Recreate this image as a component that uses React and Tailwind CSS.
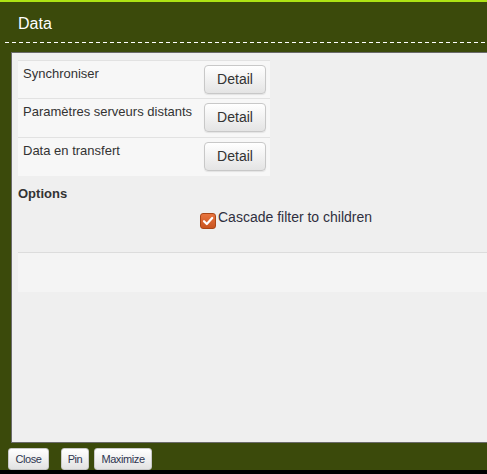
import React from 'react'

const font = { fontFamily: '"Liberation Sans", Arial, sans-serif' }

// Bouton "Detail" des lignes
function DetailButton() {
  return (
    <button className="w-[62px] h-[29px] mt-[4px] rounded-[4px] border border-[#c8c8c8] bg-gradient-to-b from-white to-[#e4e4e4] text-[14px] text-[#333] shadow-[0_1px_1px_rgba(0,0,0,0.08)]">
      Detail
    </button>
  )
}

function Row({ label, tall }) {
  return (
    <div className={`flex ${tall ? 'h-[39px]' : 'h-[38px]'} border-t border-[#e2e2e2] bg-[#f7f7f7]`}>
      <div className="w-[186px] pl-[5px] pt-[5px] text-[13px] leading-[16px] text-[#333]">{label}</div>
      <DetailButton />
    </div>
  )
}

function FooterButton({ children, className }) {
  return (
    <button className={`h-[22px] rounded-[3px] border border-[#c8c8c8] bg-gradient-to-b from-white to-[#e2e2e2] text-[11px] tracking-[-0.4px] text-[#2e3550] ${className}`}>
      {children}
    </button>
  )
}

export default function App() {
  return (
    <div style={font} className="w-[487px] h-[474px] overflow-hidden flex flex-col bg-[#3b4a0b] border-t-2 border-[#aee314]">
      {/* Titre */}
      <div className="h-[40px] pl-[18px] pt-[12px] text-[16px] leading-[20px] text-white">Data</div>
      <div className="ml-[5px] h-px bg-[repeating-linear-gradient(to_right,#ffffff_0_4px,transparent_4px_7px)]" />

      {/* Panneau */}
      <div className="mt-[9px] ml-[11px] h-[391px] border-t border-l border-b border-[#6a6a6a] bg-[#efefef] pt-[7px] pl-[6px]">
        <div className="w-[252px]">
          <Row label="Synchroniser" />
          <Row label="Paramètres serveurs distants" tall />
          <Row label="Data en transfert" tall />
        </div>

        <div className="mt-[10px] text-[13px] leading-[16px] font-bold text-[#333]">Options</div>

        <div className="mt-[6px] ml-[182px] flex items-start">
          <div className="mt-[5px] w-[16px] h-[16px] rounded-[3px] border border-[#a94617] bg-gradient-to-b from-[#e8743e] to-[#c9541f] flex items-center justify-center">
            <svg width="12" height="12" viewBox="0 0 12 12">
              <path d="M2 6.2 L4.8 9 L10.2 3" fill="none" stroke="white" strokeWidth="2.2" strokeLinecap="round" strokeLinejoin="round" />
            </svg>
          </div>
          <span className="ml-[2px] text-[14px] leading-[18px] text-[#2f3040]">Cascade filter to children</span>
        </div>

        <div className="mt-[23px] h-[40px] border-t border-[#dcdcdc] bg-[#f4f4f4]" />
      </div>

      {/* Pied */}
      <div className="flex pt-[5px] pl-[8px] h-[27px]">
        <FooterButton className="w-[41px]">Close</FooterButton>
        <FooterButton className="w-[28px] ml-[12px]">Pin</FooterButton>
        <FooterButton className="w-[58px] ml-[5px]">Maximize</FooterButton>
      </div>
      <div className="flex-1 bg-black" />
    </div>
  )
}
